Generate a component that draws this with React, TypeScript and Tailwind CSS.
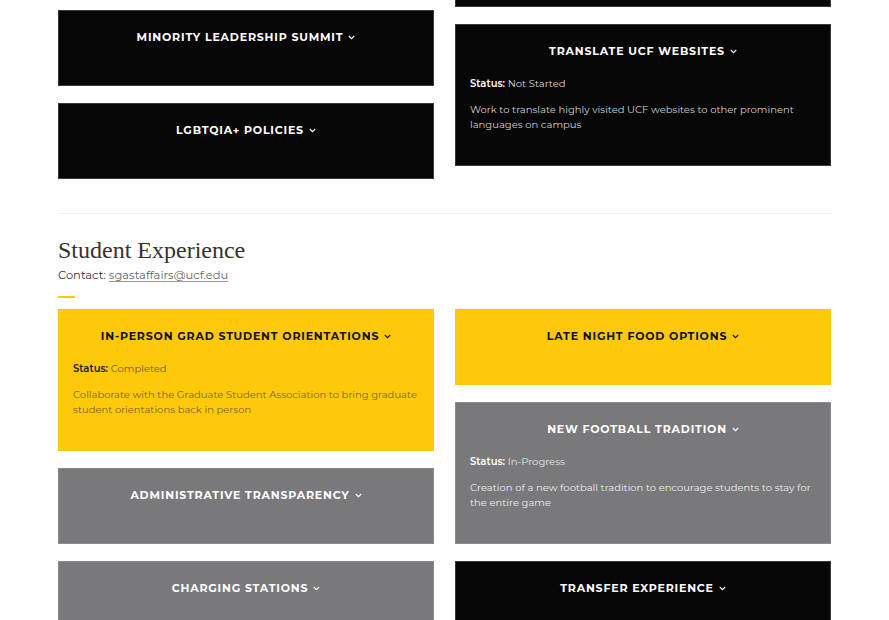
import React from "react";

type Card = {
  title: string;
  color: "black" | "gold" | "gray";
  status?: string;
  desc?: string;
};

const Chevron = ({ cls }: { cls: string }) => (
  <svg width="7" height="5" viewBox="0 0 7 5" className={cls} fill="none">
    <path d="M0.8 1 L3.5 3.7 L6.2 1" stroke="currentColor" strokeWidth="1.1" />
  </svg>
);

function CardBox({ c }: { c: Card }) {
  const bg =
    c.color === "black"
      ? "bg-[#060606] border-[#3a3a3a]"
      : c.color === "gold"
      ? "bg-[#ffc90b] border-[#ffc90b]"
      : "bg-[#79787b] border-[#8a898c]";
  const titleCol = c.color === "gold" ? "text-[#111]" : "text-white";
  const labelCol = c.color === "gold" ? "text-[#1a1a1a]" : "text-white";
  const valCol = c.color === "gold" ? "text-[#6b5b22]" : c.color === "gray" ? "text-[#e4e4e4]" : "text-[#d6d6d6]";
  const descCol = c.color === "gold" ? "text-[#7a6520]" : c.color === "gray" ? "text-[#ececec]" : "text-[#d0d0d0]";
  return (
    <div className={`border ${bg} px-[14px] ${c.status ? "h-[142px]" : "h-[76px]"}`}>
      {c.title && (
        <div className={`mt-[19px] flex items-center justify-center gap-[5px] text-[11px] font-bold uppercase tracking-[0.8px] leading-[14px] ${titleCol}`}>
          <span>{c.title}</span>
          <Chevron cls={titleCol} />
        </div>
      )}
      {c.status && (
        <>
          <div className="mt-[18px] text-[10px] leading-[15px]">
            <span className={`font-semibold ${labelCol}`}>Status:</span>{" "}
            <span className={valCol}>{c.status}</span>
          </div>
          <div className={`mt-[11px] text-[10px] leading-[15px] ${descCol}`}>{c.desc}</div>
        </>
      )}
    </div>
  );
}

export default function App() {
  const font = { fontFamily: '"Montserrat", "Inter", "Liberation Sans", sans-serif' };
  const topLeft: Card[] = [
    { title: "Minority Leadership Summit", color: "black" },
    { title: "LGBTQIA+ Policies", color: "black" },
  ];
  const topRight: Card[] = [
    { title: "", color: "black" },
    {
      title: "Translate UCF Websites",
      color: "black",
      status: "Not Started",
      desc: "Work to translate highly visited UCF websites to other prominent languages on campus",
    },
  ];
  const left: Card[] = [
    {
      title: "In-Person Grad Student Orientations",
      color: "gold",
      status: "Completed",
      desc: "Collaborate with the Graduate Student Association to bring graduate student orientations back in person",
    },
    { title: "Administrative Transparency", color: "gray" },
    { title: "Charging Stations", color: "gray" },
  ];
  const right: Card[] = [
    { title: "Late Night Food Options", color: "gold" },
    {
      title: "New Football Tradition",
      color: "gray",
      status: "In-Progress",
      desc: "Creation of a new football tradition to encourage students to stay for the entire game",
    },
    { title: "Transfer Experience", color: "black" },
  ];
  return (
    <div className="h-[620px] overflow-hidden bg-white" style={font}>
      <div className="mx-[58px] w-[773px]">
        <div className="-mt-[69px] grid grid-cols-2 gap-x-[21px]">
          <div className="flex flex-col gap-[17px] pt-[79px]">
            {topLeft.map((c) => (
              <CardBox key={c.title} c={c} />
            ))}
          </div>
          <div className="flex flex-col gap-[17px]">
            {topRight.map((c, i) => (
              <CardBox key={i} c={c} />
            ))}
          </div>
        </div>
        <div className="mt-[34px] h-px bg-[#f0f0f0]" />
        <h2
          className="mt-[22px] text-[24px] leading-[28px] text-[#333]"
          style={{ fontFamily: '"Liberation Serif", "DejaVu Serif", serif' }}
        >
          Student Experience
        </h2>
        <div className="mt-[3px] text-[11.5px] leading-[16px] text-[#333]">
          Contact:{" "}
          <span className="text-[#666] underline decoration-[#999] underline-offset-2">sgastaffairs@ucf.edu</span>
        </div>
        <div className="mt-[13px] h-[2px] w-[17px] bg-[#ffc90b]" />
        <div className="mt-[11px] grid grid-cols-2 gap-x-[21px]">
          <div className="flex flex-col gap-[17px]">
            {left.map((c) => (
              <CardBox key={c.title} c={c} />
            ))}
          </div>
          <div className="flex flex-col gap-[17px]">
            {right.map((c) => (
              <CardBox key={c.title} c={c} />
            ))}
          </div>
        </div>
      </div>
    </div>
  );
}
